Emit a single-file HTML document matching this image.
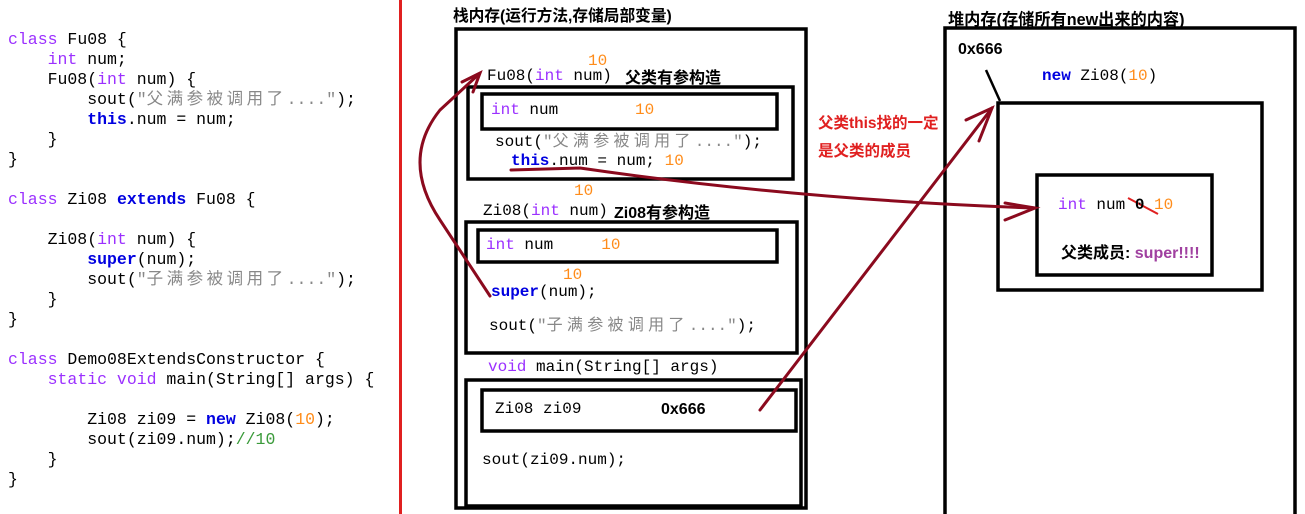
<!DOCTYPE html>
<html><head><meta charset="utf-8"><style>
body{margin:0;width:1305px;height:514px;background:#fff;position:relative;overflow:hidden;font-family:"Liberation Mono","Noto Sans CJK SC",monospace;}
.t{position:absolute;white-space:pre;font-size:16.5px;line-height:20px;color:#000;}
.d{font-size:16px !important}
.k{color:#9b30ff}.b{color:#0000e0;font-weight:bold}.s{color:#888}.o{color:#ff8c1a}.g{color:#3a9a3a}
.c{letter-spacing:3.5px}.d .c{letter-spacing:4.3px}
.h{position:absolute;white-space:pre;font-family:"Liberation Sans","Noto Sans CJK SC",sans-serif;font-weight:bold;font-size:15px;color:#000}
</style></head><body>
<div class="t" style="left:8px;top:30px"><span class="k">class</span> Fu08 {
    <span class="k">int</span> num;
    Fu08(<span class="k">int</span> num) {
        sout(<span class="s">"<span class="c">父满参被调用了</span>...."</span>);
        <span class="b">this</span>.num = num;
    }
}

<span class="k">class</span> Zi08 <span class="b">extends</span> Fu08 {

    Zi08(<span class="k">int</span> num) {
        <span class="b">super</span>(num);
        sout(<span class="s">"<span class="c">子满参被调用了</span>...."</span>);
    }
}

<span class="k">class</span> Demo08ExtendsConstructor {
    <span class="k">static void</span> main(String[] args) {

        Zi08 zi09 = <span class="b">new</span> Zi08(<span class="o">10</span>);
        sout(zi09.num);<span class="g">//10</span>
    }
}</div>
<div style="position:absolute;left:399px;top:0;width:3px;height:514px;background:#e02020"></div>

<div class="h" style="left:453px;top:3px;font-size:15.7px">栈内存(运行方法,存储局部变量)</div>
<div class="h" style="left:948px;top:6px;font-size:16.2px">堆内存(存储所有new出来的内容)</div>

<svg style="position:absolute;left:0;top:0" width="1305" height="514">
<g fill="none" stroke="#000" stroke-width="3.5">
<rect x="456" y="29" width="350" height="479"/>
<rect x="468" y="87" width="325" height="92"/>
<rect x="482" y="94" width="295" height="35"/>
<rect x="466" y="222" width="331" height="131"/>
<rect x="478" y="230" width="299" height="32"/>
<rect x="466" y="380" width="335" height="126"/>
<rect x="482" y="390" width="314" height="41"/>
<rect x="945" y="28" width="350" height="490"/>
<rect x="998" y="103" width="264" height="187"/>
<rect x="1037" y="175" width="175" height="100"/>
</g>
<line x1="986" y1="70" x2="1000" y2="101" stroke="#000" stroke-width="2.5"/>
<g fill="none" stroke="#8b0a1e" stroke-width="3" stroke-linecap="round">
<path d="M511 170 L580 168 Q800 200 1035 208"/>
<path d="M1005 203 L1035 208 L1005 220"/>
<path d="M490 296 L440 220 Q400 160 440 110 L478 75"/>
<path d="M462 82 L480 73 L473 92"/>
<path d="M760 410 L992 108"/>
<path d="M966 120 L992 108 L979 141"/>
</g>
<line x1="1128" y1="198" x2="1158" y2="214" stroke="#e02020" stroke-width="2"/>
</svg>

<div class="t d" style="left:588px;top:51px"><span class="o">10</span></div>
<div class="t d" style="left:487px;top:66px">Fu08(<span class="k">int</span> num)</div>
<div class="h" style="left:625px;top:64px;font-size:16px">父类有参构造</div>
<div class="t d" style="left:491px;top:100px"><span class="k">int</span> num        <span class="o">10</span></div>
<div class="t d" style="left:495px;top:132px">sout(<span class="s">"<span class="c">父满参被调用了</span>...."</span>);</div>
<div class="t d" style="left:511px;top:151px"><span class="b">this</span>.num = num; <span class="o">10</span></div>
<div class="t d" style="left:574px;top:181px"><span class="o">10</span></div>
<div class="t d" style="left:483px;top:201px">Zi08(<span class="k">int</span> num)</div>
<div class="h" style="left:614px;top:199px;font-size:16px">Zi08有参构造</div>
<div class="t d" style="left:486px;top:235px"><span class="k">int</span> num     <span class="o">10</span></div>
<div class="t d" style="left:563px;top:265px"><span class="o">10</span></div>
<div class="t d" style="left:491px;top:282px"><span class="b">super</span>(num);</div>
<div class="t d" style="left:489px;top:316px">sout(<span class="s">"<span class="c">子满参被调用了</span>...."</span>);</div>
<div class="t d" style="left:488px;top:357px"><span class="k">void</span> main(String[] args)</div>
<div class="t d" style="left:495px;top:399px">Zi08 zi09</div>
<div class="h" style="left:661px;top:401px;font-size:16px">0x666</div>
<div class="t d" style="left:482px;top:450px">sout(zi09.num);</div>

<div class="h" style="left:818px;top:111px;color:#e02020;font-size:15.5px">父类this找的一定</div>
<div class="h" style="left:818px;top:139px;color:#e02020;font-size:15.5px">是父类的成员</div>

<div class="h" style="left:958px;top:41px;font-size:16px">0x666</div>
<div class="t d" style="left:1042px;top:66px"><span class="b">new</span> Zi08(<span class="o">10</span>)</div>
<div class="t d" style="left:1058px;top:195px"><span class="k">int</span> num <b>0</b> <span class="o">10</span></div>
<div class="h" style="left:1061px;top:239px;font-size:16px">父类成员: <span style="color:#a040a0">super!!!!</span></div>
</body></html>
